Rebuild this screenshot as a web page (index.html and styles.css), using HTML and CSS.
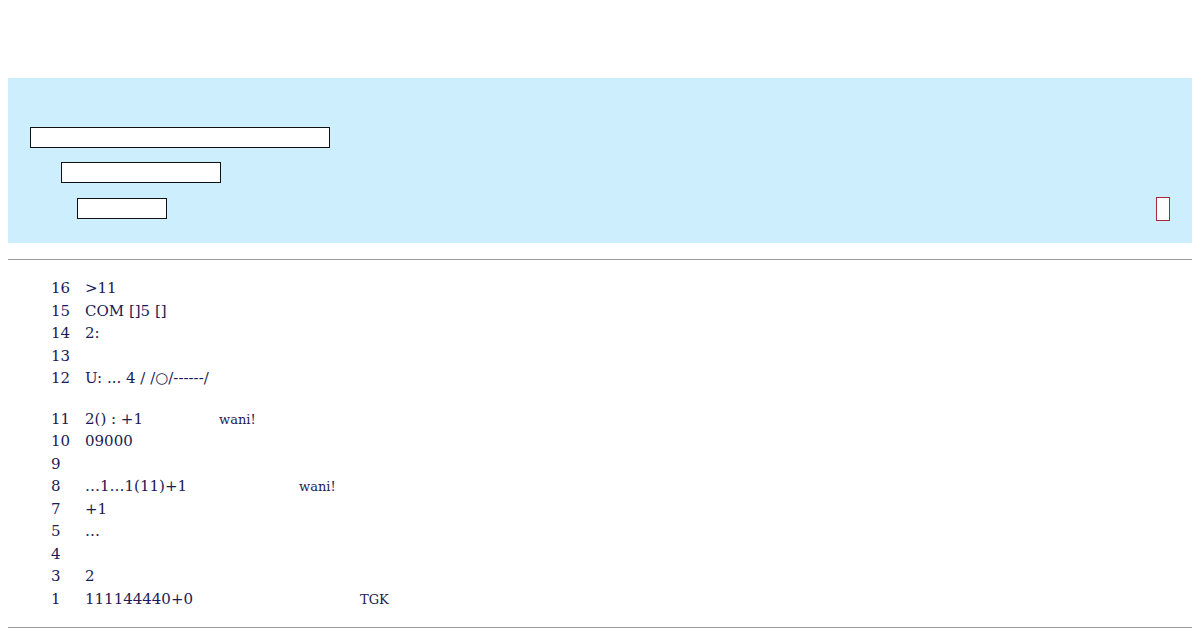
FILE: index.html
```html
<!DOCTYPE html>
<html lang="en">
<head>
    <meta charset="UTF-8">
    <meta name="viewport" content="width=device-width, initial-scale=1.0">
    <title>Log</title>
    <link rel="stylesheet" href="styles.css">
</head>
<body>
    <div class="header"></div>

    <div class="panel">
        <div class="field-row">
            <input type="text" class="field field-long">
        </div>
        <div class="field-row indent-1">
            <input type="text" class="field field-mid">
        </div>
        <div class="field-row indent-2 last-row">
            <input type="text" class="field field-short">
            <span class="tofu"></span>
        </div>
    </div>

    <hr class="rule">

    <div class="log">
        <div class="group">
            <div class="row"><span class="num">16</span><span class="text">&gt;11</span></div>
            <div class="row"><span class="num">15</span><span class="text">COM []5 []</span></div>
            <div class="row"><span class="num">14</span><span class="text">2:</span></div>
            <div class="row"><span class="num">13</span><span class="text"></span></div>
            <div class="row"><span class="num">12</span><span class="text">U: ... 4 / /○/------/</span></div>
        </div>
        <div class="group">
            <div class="row"><span class="num">11</span><span class="text w-a">2() : +1</span><span class="note">wani!</span></div>
            <div class="row"><span class="num">10</span><span class="text">09000</span></div>
            <div class="row"><span class="num">9</span><span class="text"></span></div>
            <div class="row"><span class="num">8</span><span class="text w-b">…1…1(11)+1</span><span class="note">wani!</span></div>
            <div class="row"><span class="num">7</span><span class="text">+1</span></div>
            <div class="row"><span class="num">5</span><span class="text">…</span></div>
            <div class="row"><span class="num">4</span><span class="text"></span></div>
            <div class="row"><span class="num">3</span><span class="text">2</span></div>
            <div class="row"><span class="num">1</span><span class="text w-c">111144440+0</span><span class="note">TGK</span></div>
        </div>
    </div>

    <hr class="rule rule-end">
</body>
</html>
```

FILE: styles.css
```css
body {
    margin: 8px;
    font-family: "DejaVu Serif", serif;
    color: #1b1b55;
}
.header {
    height: 70px;
}
.panel {
    background-color: #cdeefd;
    height: 165px;
    box-sizing: border-box;
    padding: 49px 22px 0 22px;
    display: flex;
    flex-direction: column;
    gap: 14px;
}
.field-row {
    display: flex;
    align-items: center;
}
.indent-1 {
    padding-left: 31px;
}
.indent-2 {
    padding-left: 47px;
    margin-top: 1px;
}
.last-row {
    justify-content: space-between;
    align-items: flex-start;
}
.field {
    box-sizing: border-box;
    height: 21px;
    border: 1px solid #111;
    background: #fff;
    margin: 0;
    padding: 0;
}
.field-long {
    width: 300px;
}
.field-mid {
    width: 160px;
}
.field-short {
    width: 90px;
}
.tofu {
    display: block;
    width: 14px;
    height: 24px;
    box-sizing: border-box;
    border: 1.5px solid #a32a3c;
    background: #fff;
    margin-top: -1px;
}
.rule {
    border: none;
    border-top: 1px solid #999;
    margin: 16px 0 0 0;
}
.rule-end {
    margin-top: 0;
}
.log {
    padding: 17px 0 17px 43px;
    font-size: 15px;
}
.group + .group {
    margin-top: 18px;
}
.row {
    display: flex;
    align-items: baseline;
    height: 22.5px;
    line-height: 22.5px;
}
.num {
    width: 34px;
}
.text {
    display: inline-block;
}
.w-a {
    width: 134px;
}
.w-b {
    width: 214px;
}
.w-c {
    width: 275px;
}
.note {
    font-size: 13px;
}
```
